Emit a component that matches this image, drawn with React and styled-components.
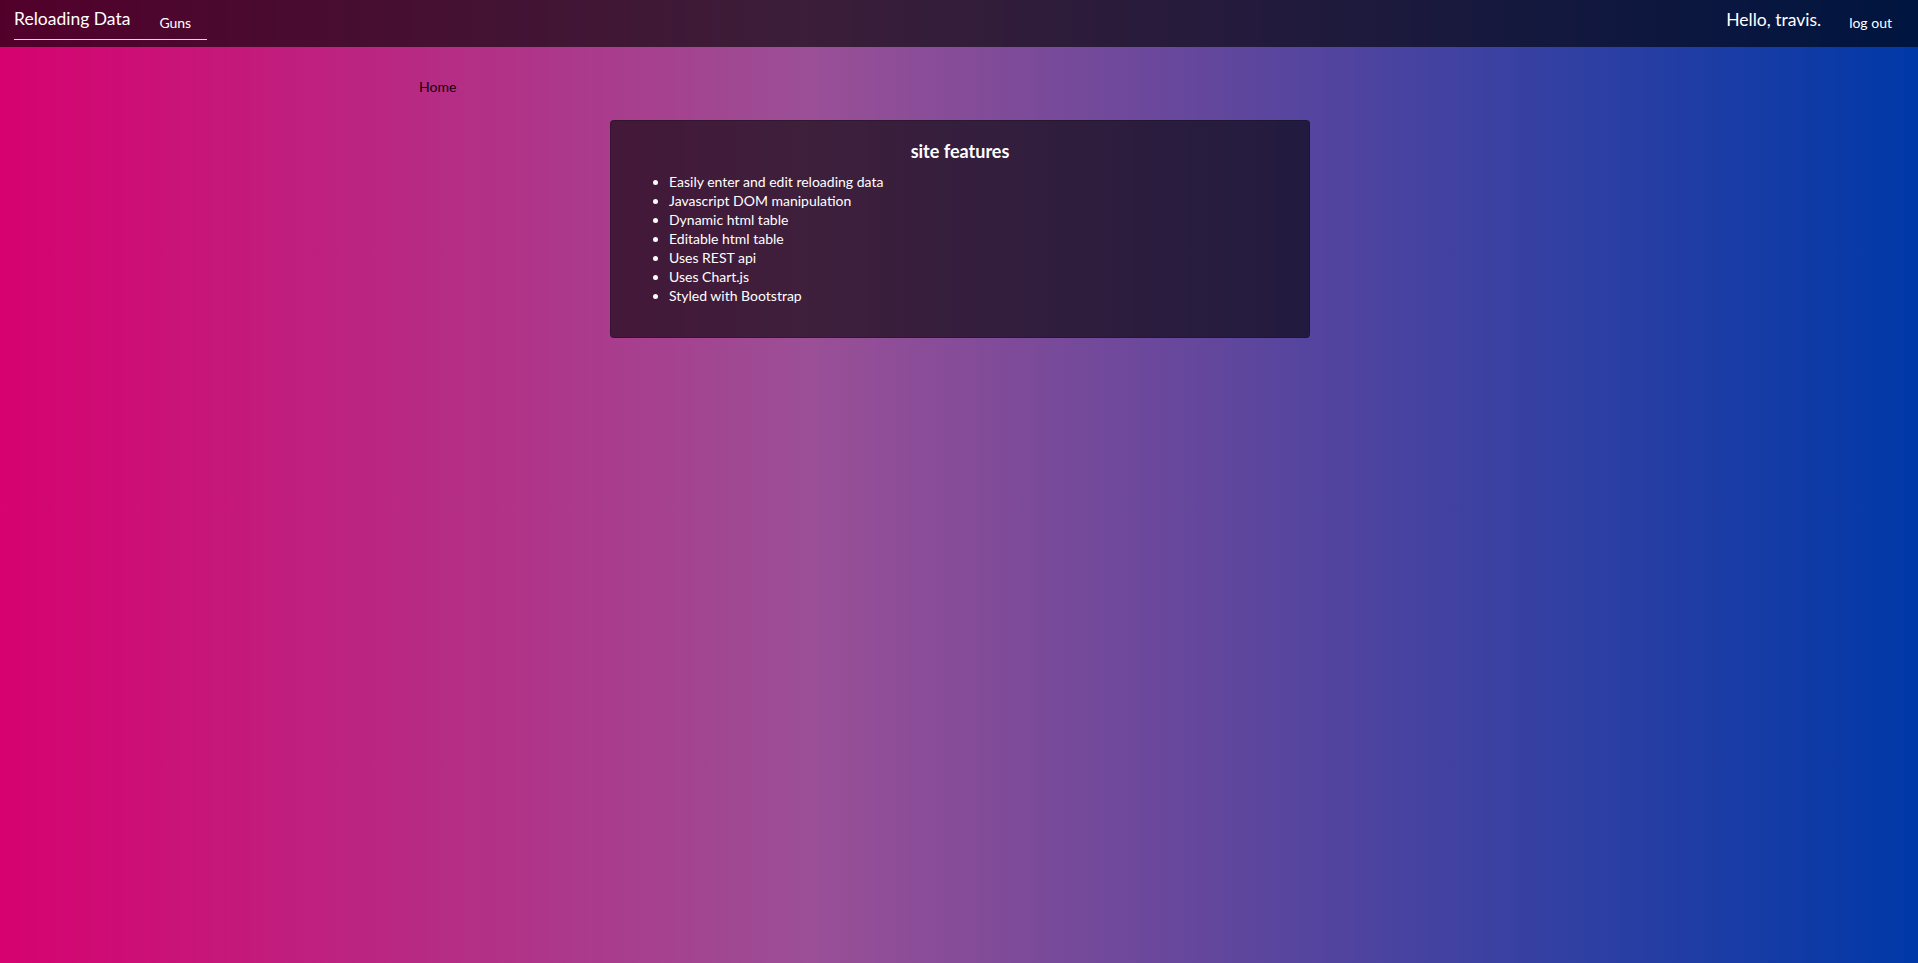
import React from "react";
import styled, { createGlobalStyle } from "styled-components";

const GlobalStyle = createGlobalStyle`
  html, body {
    margin: 0;
    padding: 0;
  }
  body {
    min-height: 100vh;
    font-family: Lato, "Liberation Sans", sans-serif;
    background: linear-gradient(to right, #d60270 0%, #9b4f96 42%, #0038a8 100%);
  }
`;

const NavBar = styled.nav`
  height: 47px;
  box-sizing: border-box;
  padding: 0 26px 0 14px;
  display: flex;
  justify-content: space-between;
  align-items: flex-start;
  background: rgba(0, 0, 0, 0.62);
  color: #fff;
`;

const NavGroup = styled.div`
  display: flex;
  align-items: flex-start;
  height: 40px;
  box-sizing: border-box;
  border-bottom: ${(p) => (p.$underline ? "1px solid #e6d6e4" : "none")};
  padding-right: ${(p) => (p.$underline ? "16px" : "0")};
`;

const Brand = styled.a`
  font-size: 17.5px;
  line-height: 21.6px;
  margin-top: 8px;
  color: #fff;
  text-decoration: none;
`;

const NavLink = styled.a`
  font-size: 14px;
  line-height: 16.8px;
  margin-top: ${(p) => p.$top || "15px"};
  margin-left: ${(p) => p.$gap || "0"};
  color: #fff;
  text-decoration: none;
`;

const Greeting = styled.span`
  font-size: 17.5px;
  line-height: 21.6px;
  margin-top: 9px;
  color: #fff;
`;

const Main = styled.main`
  max-width: 1110px;
  margin: 0 auto;
  padding: 29px 15px 0;
`;

const Breadcrumb = styled.ol`
  list-style: none;
  margin: 0 0 23px;
  padding: 0 0 0 15px;
  font-size: 14px;
  line-height: 21px;
  color: #12000a;
`;

const Card = styled.section`
  width: 700px;
  margin: 0 auto;
  box-sizing: border-box;
  padding: 18px 20px 32px;
  background: rgba(0, 0, 0, 0.6);
  border: 1px solid rgba(0, 0, 0, 0.2);
  border-radius: 4px;
  color: #fff;
  transform: translateX(1px);
`;

const CardTitle = styled.h5`
  margin: 0 0 9px;
  font-size: 18px;
  line-height: 24px;
  font-weight: 700;
  text-align: center;
`;

const FeatureList = styled.ul`
  margin: 0;
  padding-left: 38px;
  font-size: 14px;
  line-height: 19px;
`;

const features = [
  "Easily enter and edit reloading data",
  "Javascript DOM manipulation",
  "Dynamic html table",
  "Editable html table",
  "Uses REST api",
  "Uses Chart.js",
  "Styled with Bootstrap",
];

const App = () => {
  return (
    <>
      <GlobalStyle />
      <NavBar>
        <NavGroup $underline>
          <Brand href="#">Reloading Data</Brand>
          <NavLink href="#" $gap="29px" $top="14.5px">Guns</NavLink>
        </NavGroup>
        <NavGroup>
          <Greeting>Hello, travis.</Greeting>
          <NavLink href="#" $gap="28px" $top="15px">log out</NavLink>
        </NavGroup>
      </NavBar>
      <Main>
        <Breadcrumb>
          <li>Home</li>
        </Breadcrumb>
        <Card>
          <CardTitle>site features</CardTitle>
          <FeatureList>
            {features.map((f) => (
              <li key={f}>{f}</li>
            ))}
          </FeatureList>
        </Card>
      </Main>
    </>
  );
};

export default App;
